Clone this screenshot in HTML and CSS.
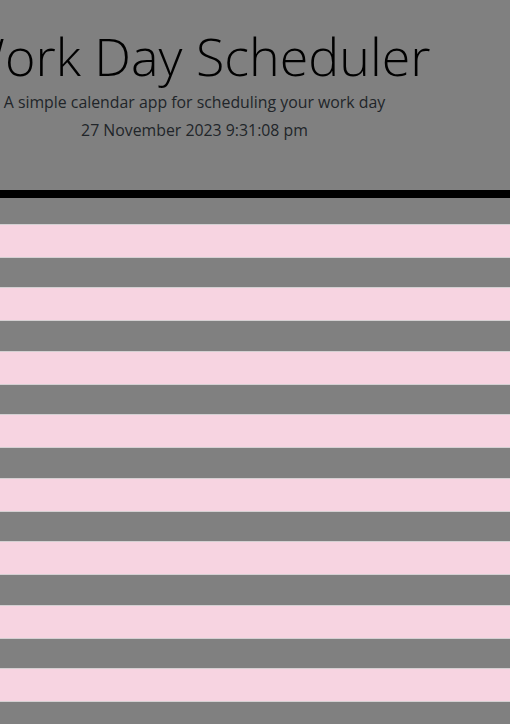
FILE: index.html
```html
<!DOCTYPE html>
<html lang="en">
<head>
<meta charset="utf-8">
<title>Work Day Scheduler</title>
<link rel="stylesheet" href="styles.css">
</head>
<body>
<header class="jumbotron">
  <div class="intro">
    <h1 class="title">Work Day Scheduler</h1>
    <p class="lead">A simple calendar app for scheduling your work day</p>
    <p class="current-day">27 November 2023 9:31:08 pm</p>
  </div>
</header>
<main class="schedule">
  <textarea class="description"></textarea>
  <textarea class="description"></textarea>
  <textarea class="description"></textarea>
  <textarea class="description"></textarea>
  <textarea class="description"></textarea>
  <textarea class="description"></textarea>
  <textarea class="description"></textarea>
  <textarea class="description"></textarea>
</main>
</body>
</html>
```

FILE: styles.css
```css
html, body {
  margin: 0;
  padding: 0;
}
body {
  background: #808080;
  font-family: "Open Sans", "Liberation Sans", sans-serif;
  color: #212529;
  overflow: hidden;
}
.jumbotron {
  padding: 23px 0 48px;
  border-bottom: 8px solid #000;
}
.intro {
  width: 389px;
  display: flex;
  flex-direction: column;
  align-items: center;
}
.title {
  margin: 0;
  font-size: 52px;
  font-weight: 300;
  line-height: 66px;
  color: #000;
  white-space: nowrap;
}
.lead {
  margin: 1px 0 0;
  font-size: 15.85px;
  line-height: 24px;
  white-space: nowrap;
}
.current-day {
  margin: 4px 0 0;
  font-size: 15.85px;
  line-height: 24px;
  white-space: nowrap;
}
.schedule {
  display: flex;
  flex-direction: column;
  gap: 29.43px;
  padding-top: 26px;
}
.description {
  display: block;
  box-sizing: border-box;
  width: 100%;
  height: 34px;
  margin: 0;
  padding: 0;
  border: none;
  border-top: 1px solid #d4d0d2;
  border-bottom: 1px solid #d4d0d2;
  background: #f7d4e1;
  resize: none;
  outline: none;
}
```
